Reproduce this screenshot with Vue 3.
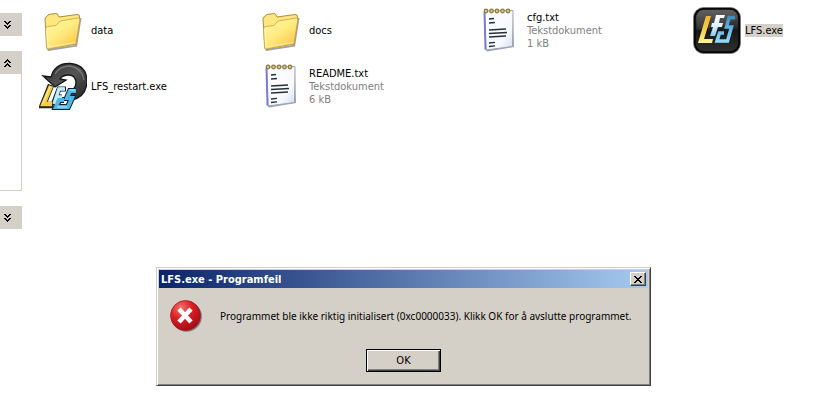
<template>
  <div class="explorer">
    <aside class="sidebar">
      <section v-for="panel in panels" :key="panel.id" class="panel">
        <button
          class="panel-toggle"
          :aria-label="panel.open ? 'Collapse' : 'Expand'"
          @click="panel.open = !panel.open"
        >
          <svg width="7" height="8" viewBox="0 0 7 8" :class="{ flipped: panel.open }" shape-rendering="crispEdges">
            <path
              d="M0 0h2v1h-2zM5 0h2v1h-2zM1 1h2v1h-2zM4 1h2v1h-2zM2 2h3v1h-3zM3 3h1v1h-1zM0 4h2v1h-2zM5 4h2v1h-2zM1 5h2v1h-2zM4 5h2v1h-2zM2 6h3v1h-3zM3 7h1v1h-1z"
            />
          </svg>
        </button>
        <div v-if="panel.open" class="panel-body"></div>
      </section>
    </aside>

    <ul class="files">
      <li v-for="file in files" :key="file.name" class="file">
        <svg v-if="file.icon === 'folder'" width="48" height="48" viewBox="0 0 48 48">
          <defs>
            <linearGradient id="folderFront" x1="0" y1="0" x2="0.8" y2="1">
              <stop offset="0" stop-color="#fff7a8" />
              <stop offset="0.5" stop-color="#ffec83" />
              <stop offset="1" stop-color="#fbc544" />
            </linearGradient>
          </defs>
          <path d="M8 43L36 39L41 12L42.500 12L38 40.500L9 45z" fill="#777" opacity="0.7" />
          <path
            d="M6 13Q6 11 8 10.500L9 9Q9.500 8.500 11 8.300L17 7.500Q18.500 7.500 19 9L20 11L38 8.500Q41 8.500 40.500 11L37 38L8 42.500z"
            fill="#ffe780" stroke="#a98d3c"
          />
          <path
            d="M6.500 23Q6.500 21 8.500 20.500L17 19.500L20 16Q21 15 23 14.700L39 12Q41 12 40.700 14L37 38L9 43Q7.500 43 7.500 41z"
            fill="url(#folderFront)" stroke="#c4a240" stroke-width="0.8"
          />
          <path d="M8 23L9 41L36 36.500" fill="none" stroke="#fffbd5" opacity="0.6" />
        </svg>

        <svg v-else-if="file.icon === 'text'" width="48" height="48" viewBox="0 0 48 48">
          <defs>
            <linearGradient id="paper" x1="0" y1="0" x2="1" y2="1">
              <stop offset="0" stop-color="#fff" />
              <stop offset="0.7" stop-color="#f6f9fd" />
              <stop offset="1" stop-color="#cfdcea" />
            </linearGradient>
          </defs>
          <path d="M10 43L37 40L38 6L39 41L12 45.500z" fill="#777" opacity="0.7" />
          <path d="M9.500 5L38 4.500L37.500 40.500L11 44z" fill="url(#paper)" stroke="#9aa4bd" />
          <path d="M9.500 6L10.500 43.500" stroke="#7d7dd0" stroke-width="2" />
          <path
            d="M14 13l5-.5M14 17l6-.5M14 24l17-1M14 27.500l18-1M14 31l17-1M14 37l6-.7M14 40.500l6-.7"
            stroke="#27303a" stroke-width="1.300"
          />
          <g fill="#d9c87c" stroke="#8c7a45" stroke-width="1.200">
            <circle v-for="n in 5" :key="n" :cx="5.5 + n * 5.5" cy="5" r="1.8" />
          </g>
        </svg>

        <svg v-else-if="file.icon === 'lfs'" width="48" height="48" viewBox="0 0 48 48">
          <defs>
            <linearGradient id="tile" x1="0" y1="0" x2="0" y2="1">
              <stop offset="0" stop-color="#555" />
              <stop offset="0.4" stop-color="#2c2c2c" />
              <stop offset="0.5" stop-color="#171717" />
              <stop offset="1" stop-color="#303030" />
            </linearGradient>
            <linearGradient id="gold" x1="0" y1="0" x2="0" y2="1">
              <stop offset="0" stop-color="#f2b234" />
              <stop offset="0.6" stop-color="#f8d64d" />
              <stop offset="1" stop-color="#fff59a" />
            </linearGradient>
            <linearGradient id="ice" x1="0" y1="0" x2="0" y2="1">
              <stop offset="0" stop-color="#fff" />
              <stop offset="0.5" stop-color="#e2f3fb" />
              <stop offset="1" stop-color="#86cbee" />
            </linearGradient>
            <linearGradient id="sky" gradientUnits="userSpaceOnUse" x1="0" y1="9" x2="0" y2="38">
              <stop offset="0" stop-color="#3c88bd" />
              <stop offset="0.5" stop-color="#64b8e8" />
              <stop offset="1" stop-color="#9be2ff" />
            </linearGradient>
          </defs>
          <rect x="0.500" y="1.500" width="47" height="46" rx="10" fill="#111" stroke="#777" stroke-width="0.700" />
          <rect x="2" y="3" width="44" height="43" rx="9" fill="url(#tile)" stroke="#050505" stroke-width="1.500" />
          <path d="M4 24Q25 22 44 13V9Q43 4 38 4H10Q4 4 4 10z" fill="#fff" opacity="0.08" />
          <path d="M13 10h5l-7 23h9l-1 4H5z" fill="url(#gold)" />
          <path d="M23 9h9l-1 3h-4l-1 5h4l-1 4h-4l-3 9h-5l3-9h-2l1-4h2z" fill="url(#ice)" />
          <path
            d="M42 11.500H36L33.500 21H38.500L34.500 35H24L26.500 27H31"
            fill="none" stroke="url(#sky)" stroke-width="3.500"
          />
        </svg>

        <svg v-else width="48" height="48" viewBox="0 0 48 48">
          <defs>
            <linearGradient id="arrow" x1="0" y1="0" x2="1" y2="1">
              <stop offset="0" stop-color="#303030" />
              <stop offset="0.5" stop-color="#555" />
              <stop offset="1" stop-color="#222" />
            </linearGradient>
          </defs>
          <path
            d="M4 14L12 15Q16 1 31 1.500Q48 3 48 20Q47 35 33 38L31 29Q37 27 37 20Q36 13 30 13Q23 13 21 17L27 18L16 25z"
            fill="url(#arrow)" stroke="#151515" stroke-width="1.300"
          />
          <path d="M16 12Q21 4 31 4Q43 6 45 18" fill="none" stroke="#888" stroke-width="1.300" opacity="0.7" />
          <g fill="none">
            <path d="M12 23L4 43H14" stroke="#222" stroke-width="6.500" />
            <path d="M27 27H20L14 43M16 35H23" stroke="#16222b" stroke-width="5" />
            <path d="M37 29H31L28 36H33L29 45H17L20 38H25" stroke="#16222b" stroke-width="6" />
            <path d="M12 24L4.500 42H13" stroke="#f5ce43" stroke-width="4.500" />
            <path d="M26 27H20L15 42M17 35H23" stroke="#bfeaff" stroke-width="3.500" />
            <path d="M37 29H31L28 36H33L29 45H17L20 38H25" stroke="#4fb7e8" stroke-width="4" />
          </g>
          <path d="M11 25L3.500 42" stroke="#fff3a6" />
          <path d="M18 45h10M31 28h5M20 26h5" stroke="#c7f0ff" />
        </svg>

        <div class="file-text">
          <span class="file-name" :class="{ selected: file.selected }">{{ file.name }}</span>
          <template v-if="file.type">
            <span class="file-meta">{{ file.type }}</span>
            <span class="file-meta">{{ file.size }}</span>
          </template>
        </div>
      </li>
    </ul>

    <div v-if="dialogOpen" class="dialog" role="alertdialog" aria-labelledby="dialog-title" aria-describedby="dialog-message">
      <header class="title-bar">
        <h1 id="dialog-title">LFS.exe - Programfeil</h1>
        <button class="btn-close" aria-label="Lukk" @click="dialogOpen = false">
          <svg width="8" height="7" viewBox="0 0 8 7" shape-rendering="crispEdges">
            <path d="M0 0h2v1h-2zM6 0h2v1h-2zM1 1h2v1h-2zM5 1h2v1h-2zM2 2h4v1h-4zM3 3h2v1h-2zM2 4h4v1h-4zM1 5h2v1h-2zM5 5h2v1h-2zM0 6h2v1h-2zM6 6h2v1h-2z" />
          </svg>
        </button>
      </header>
      <div class="dialog-body">
        <svg width="32" height="32" viewBox="0 0 32 32">
          <defs>
            <radialGradient id="error" cx="0.35" cy="0.25" r="0.8">
              <stop offset="0" stop-color="#f0776c" />
              <stop offset="0.45" stop-color="#dc2028" />
              <stop offset="1" stop-color="#a00a12" />
            </radialGradient>
          </defs>
          <circle cx="16.500" cy="16.500" r="15.300" fill="#555" opacity="0.7" />
          <circle cx="15.500" cy="15.500" r="15" fill="url(#error)" stroke="#a11616" stroke-width="0.700" />
          <path d="M9 9L21 22M21 9L9 22" stroke="#fff" stroke-width="4.500" />
        </svg>
        <p id="dialog-message">
          Programmet ble ikke riktig initialisert (0xc0000033). Klikk OK for å avslutte programmet.
        </p>
      </div>
      <div class="dialog-actions">
        <button class="btn-ok" @click="dialogOpen = false">OK</button>
      </div>
    </div>
  </div>
</template>

<script setup>
import { ref } from 'vue';

const dialogOpen = ref(true);

const panels = ref([
  { id: 1, open: false },
  { id: 2, open: true },
  { id: 3, open: false }
]);

const files = [
  { name: 'data', icon: 'folder' },
  { name: 'docs', icon: 'folder' },
  { name: 'cfg.txt', icon: 'text', type: 'Tekstdokument', size: '1 kB' },
  { name: 'LFS.exe', icon: 'lfs', selected: true },
  { name: 'LFS_restart.exe', icon: 'restart' },
  { name: 'README.txt', icon: 'text', type: 'Tekstdokument', size: '6 kB' }
];
</script>

<style>
body {
  margin: 0;
  background: #fff;
}
</style>

<style scoped>
.explorer {
  position: relative;
  display: flex;
  min-height: 100vh;
  overflow: hidden;
  font-family: Tahoma, "DejaVu Sans Condensed", "Noto Sans", sans-serif;
  font-size: 11px;
  line-height: 13px;
  color: #000;
}

button {
  font: inherit;
  color: inherit;
}

svg {
  display: block;
  flex: none;
}

.sidebar {
  flex: none;
  width: 22px;
  padding-top: 13px;
  display: flex;
  flex-direction: column;
  gap: 15px;
}

.panel-toggle {
  display: flex;
  align-items: center;
  width: 100%;
  height: 23px;
  padding: 0 4px;
  border: none;
  background: #d4d0c8;
}

.flipped {
  transform: scaleY(-1);
}

.panel-body {
  height: 116px;
  border: solid #d4d0c8;
  border-width: 0 1px 1px 0;
}

.files {
  flex: 1;
  display: grid;
  grid-template-columns: repeat(auto-fill, 128px);
  align-content: start;
  gap: 8px 90px;
  margin: 0;
  padding: 6px 0 0 17px;
  list-style: none;
}

.file {
  display: flex;
  align-items: center;
  gap: 4px;
  height: 48px;
  white-space: nowrap;
}

.file-text {
  display: flex;
  flex-direction: column;
  align-items: flex-start;
}

.file-name.selected {
  background: #d4d0c8;
}

.file-meta {
  color: #808080;
}

.dialog {
  position: absolute;
  top: 267px;
  left: 156px;
  box-sizing: border-box;
  width: 495px;
  padding: 1px;
  border: 1px solid;
  border-color: #d4d0c8 #404040 #404040 #d4d0c8;
  background: #d4d0c8;
  box-shadow: inset 1px 1px #fff, inset -1px -1px #808080;
}

.title-bar {
  display: flex;
  align-items: center;
  justify-content: space-between;
  height: 18px;
  margin: 1px;
  padding: 0 2px;
  background: linear-gradient(to right, #0a246a, #a6caf0);
}

.title-bar h1 {
  margin: 0;
  font-size: 11px;
  font-weight: bold;
  color: #fff;
}

.btn-close {
  display: flex;
  align-items: center;
  justify-content: center;
  width: 16px;
  height: 14px;
  padding: 0;
  border: 1px solid;
  border-color: #fff #404040 #404040 #fff;
  background: #d4d0c8;
  box-shadow: inset -1px -1px #808080;
}

.dialog-body {
  display: flex;
  align-items: center;
  gap: 18px;
  padding: 11px 12px 0;
}

.dialog-body p {
  margin: 0;
  font-family: "Noto Sans", sans-serif;
  font-size: 10px;
  white-space: nowrap;
}

.dialog-actions {
  display: flex;
  justify-content: center;
  padding: 17px 0 12px;
}

.btn-ok {
  width: 75px;
  height: 23px;
  padding: 0;
  border: 1px solid #000;
  background: #d4d0c8;
  box-shadow: inset 1px 1px #fff, inset -1px -1px #404040, inset -2px -2px #808080;
}
</style>
